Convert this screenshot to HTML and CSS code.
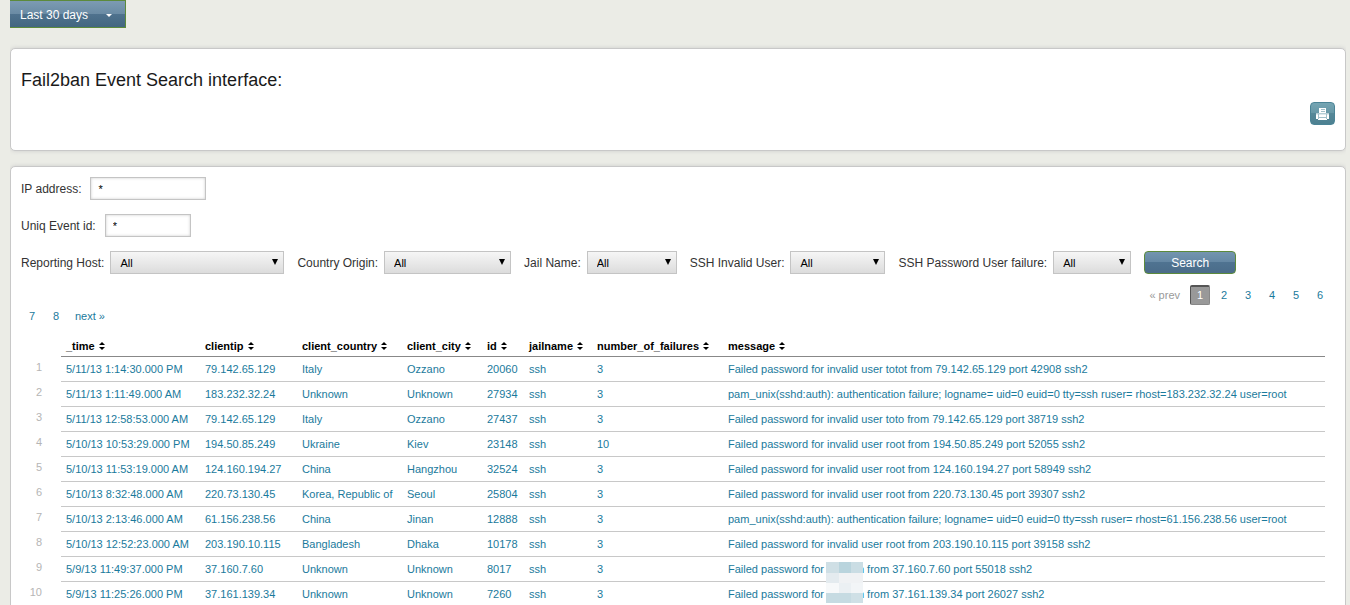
FILE: index.html
```
<!DOCTYPE html>
<html lang="en">
<head>
	<title>Fail2ban Event Search</title>
	<meta charset="UTF-8">
	<meta name="viewport" content="width=device-width, initial-scale=1.0">
	<link rel="stylesheet" href="styles.css">
</head>
<body>
	<button class="timerange" type="button">Last 30 days <span class="caret"></span></button>

	<div class="panel intro">
		<h1>Fail2ban Event Search interface:</h1>
		<button class="print" type="button" aria-label="Print">
			<svg width="13" height="12" viewBox="0 0 13 12" shape-rendering="crispEdges">
				<path fill="#fff" d="M3 0h7v5H3z"/>
				<path fill="#a3c1ca" d="M5 1h4v1H5zM5 3h4v1H5z"/>
				<path fill="#b5ced6" d="M0 5h13v1H0z"/>
				<path fill="#dfeaed" d="M0 6h13v1H0z"/>
				<path fill="#fff" d="M0 7h13v3H0zM0 10h2v1H0zM11 10h2v1h-2zM2 10h9v2H2z"/>
				<path fill="#a3c1ca" d="M2 6h1v5H2zM10 6h1v5h-1zM3 9h7v1H3z"/>
			</svg>
		</button>
	</div>

	<div class="panel">
		<form class="search" onsubmit="return false">
			<div class="field text">
				<label for="ip">IP address:</label>
				<input id="ip" class="ip" type="text" value="*">
			</div>
			<div class="field text">
				<label for="event">Uniq Event id:</label>
				<input id="event" class="event" type="text" value="*">
			</div>
			<div class="filters">
				<div class="field">
					<label for="host">Reporting Host:</label>
					<span class="select host"><select id="host"><option>All</option></select></span>
				</div>
				<div class="field">
					<label for="country">Country Origin:</label>
					<span class="select country"><select id="country"><option>All</option></select></span>
				</div>
				<div class="field">
					<label for="jail">Jail Name:</label>
					<span class="select jail"><select id="jail"><option>All</option></select></span>
				</div>
				<div class="field">
					<label for="invalid">SSH Invalid User:</label>
					<span class="select invalid"><select id="invalid"><option>All</option></select></span>
				</div>
				<div class="field">
					<label for="failure">SSH Password User failure:</label>
					<span class="select failure"><select id="failure"><option>All</option></select></span>
				</div>
				<button class="submit" type="submit">Search</button>
			</div>
		</form>

		<nav class="pager">
			<div class="pages end">
				<span class="prev">« prev</span>
				<span class="current">1</span>
				<a href="#">2</a>
				<a href="#">3</a>
				<a href="#">4</a>
				<a href="#">5</a>
				<a href="#">6</a>
			</div>
			<div class="pages">
				<a href="#">7</a>
				<a href="#">8</a>
				<a href="#">next »</a>
			</div>
		</nav>

		<table class="events">
			<colgroup>
				<col class="c-row"><col class="c-time"><col class="c-ip"><col class="c-country"><col class="c-city"><col class="c-id"><col class="c-jail"><col class="c-count"><col>
			</colgroup>
			<thead>
				<tr>
					<td></td>
					<th>_time <i class="sort"></i></th>
					<th>clientip <i class="sort"></i></th>
					<th>client_country <i class="sort"></i></th>
					<th>client_city <i class="sort"></i></th>
					<th>id <i class="sort"></i></th>
					<th>jailname <i class="sort"></i></th>
					<th>number_of_failures <i class="sort"></i></th>
					<th>message <i class="sort"></i></th>
				</tr>
			</thead>
			<tbody>
				<tr><td class="n">1</td><td>5/11/13 1:14:30.000 PM</td><td>79.142.65.129</td><td>Italy</td><td>Ozzano</td><td>20060</td><td>ssh</td><td>3</td><td>Failed password for invalid user totot from 79.142.65.129 port 42908 ssh2</td></tr>
				<tr><td class="n">2</td><td>5/11/13 1:11:49.000 AM</td><td>183.232.32.24</td><td>Unknown</td><td>Unknown</td><td>27934</td><td>ssh</td><td>3</td><td>pam_unix(sshd:auth): authentication failure; logname= uid=0 euid=0 tty=ssh ruser= rhost=183.232.32.24 user=root</td></tr>
				<tr><td class="n">3</td><td>5/11/13 12:58:53.000 AM</td><td>79.142.65.129</td><td>Italy</td><td>Ozzano</td><td>27437</td><td>ssh</td><td>3</td><td>Failed password for invalid user toto from 79.142.65.129 port 38719 ssh2</td></tr>
				<tr><td class="n">4</td><td>5/10/13 10:53:29.000 PM</td><td>194.50.85.249</td><td>Ukraine</td><td>Kiev</td><td>23148</td><td>ssh</td><td>10</td><td>Failed password for invalid user root from 194.50.85.249 port 52055 ssh2</td></tr>
				<tr><td class="n">5</td><td>5/10/13 11:53:19.000 AM</td><td>124.160.194.27</td><td>China</td><td>Hangzhou</td><td>32524</td><td>ssh</td><td>3</td><td>Failed password for invalid user root from 124.160.194.27 port 58949 ssh2</td></tr>
				<tr><td class="n">6</td><td>5/10/13 8:32:48.000 AM</td><td>220.73.130.45</td><td>Korea, Republic of</td><td>Seoul</td><td>25804</td><td>ssh</td><td>3</td><td>Failed password for invalid user root from 220.73.130.45 port 39307 ssh2</td></tr>
				<tr><td class="n">7</td><td>5/10/13 2:13:46.000 AM</td><td>61.156.238.56</td><td>China</td><td>Jinan</td><td>12888</td><td>ssh</td><td>3</td><td>pam_unix(sshd:auth): authentication failure; logname= uid=0 euid=0 tty=ssh ruser= rhost=61.156.238.56 user=root</td></tr>
				<tr><td class="n">8</td><td>5/10/13 12:52:23.000 AM</td><td>203.190.10.115</td><td>Bangladesh</td><td>Dhaka</td><td>10178</td><td>ssh</td><td>3</td><td>Failed password for invalid user root from 203.190.10.115 port 39158 ssh2</td></tr>
				<tr><td class="n">9</td><td>5/9/13 11:49:37.000 PM</td><td>37.160.7.60</td><td>Unknown</td><td>Unknown</td><td>8017</td><td>ssh</td><td>3</td><td>Failed password for <span class="user">n<svg class="mosaic" width="37" height="41" viewBox="0 0 37 41" shape-rendering="crispEdges">
					<path fill="#cfdfe5" d="M0 0h13v11H0z"/><path fill="#b9d4dd" d="M13 0h12v11H13z"/><path fill="#cadde4" d="M25 0h12v11H25z"/>
					<path fill="#e4ebef" d="M0 11h13v10H0z"/><path fill="#f0f2f4" d="M13 11h24v10H13z"/>
					<path fill="#f7f9fa" d="M0 21h13v10H0z"/><path fill="#ebf0f3" d="M13 21h12v10H13z"/><path fill="#f2f5f7" d="M25 21h12v10H25z"/>
					<path fill="#c6dbe2" d="M0 31h25v10H0z"/><path fill="#cfe0e6" d="M25 31h12v10H25z"/>
				</svg></span> from 37.160.7.60 port 55018 ssh2</td></tr>
				<tr><td class="n">10</td><td>5/9/13 11:25:26.000 PM</td><td>37.161.139.34</td><td>Unknown</td><td>Unknown</td><td>7260</td><td>ssh</td><td>3</td><td>Failed password for <span class="user">n</span> from 37.161.139.34 port 26027 ssh2</td></tr>
			</tbody>
		</table>
	</div>
</body>
</html>
```

FILE: styles.css
```
* {
	box-sizing: border-box;
}

body {
	margin: 0 4px 0 10px;
	background: #ebece6;
	color: #333;
	font: 12px/14px "Liberation Sans", Arial, sans-serif;
}

button, input, select {
	font-family: inherit;
	font-size: 12px;
}

a {
	color: #1a7a9c;
	text-decoration: none;
}

.timerange {
	display: flex;
	align-items: center;
	height: 28px;
	padding: 2px 13px 0 10px;
	border: 1px solid #5c8a3c;
	border-left: 0;
	background: linear-gradient(#7c9bb3, #6a8ba4 50%, #4f728e 50%, #426680);
	color: #fff;
}

.caret {
	margin-left: 18px;
	border: 3px solid transparent;
	border-top-color: #fff;
	border-bottom: 0;
}

.panel {
	margin-bottom: 15px;
	padding: 10px;
	border: 1px solid #c8c8c8;
	border-radius: 5px;
	background: #fff;
	box-shadow: 0 0 4px #ccc;
}

.intro {
	display: flex;
	flex-direction: column;
	margin-top: 20px;
	padding-bottom: 25px;
}

h1 {
	margin: 10px 0;
	color: #1a1a1a;
	font-size: 18px;
	font-weight: normal;
	line-height: 23px;
}

.print {
	display: flex;
	align-self: flex-end;
	align-items: center;
	justify-content: center;
	width: 25px;
	height: 23px;
	padding: 0;
	border: 1px solid #4b8496;
	border-radius: 4px;
	background: linear-gradient(#75a5b3, #6697a6 50%, #568898 50%, #4c8091);
}

.print svg {
	flex: none;
}

.search {
	display: flex;
	flex-direction: column;
	gap: 14px;
}

.field {
	display: flex;
	align-items: center;
	gap: 6px;
	white-space: nowrap;
}

.field.text {
	gap: 9px;
}

.field input {
	height: 23px;
	padding: 0 7px;
	border: 1px solid #c4c4c4;
	box-shadow: inset 0 0 3px #ccc;
	font-size: 11px;
}

.ip {
	width: 116px;
}

.event {
	width: 86px;
}

.filters {
	display: flex;
	flex-wrap: wrap;
	gap: 13px;
}

.select {
	position: relative;
}

.select::after {
	content: "";
	position: absolute;
	top: 8px;
	right: 6px;
	border: 3px solid transparent;
	border-top: 6px solid #000;
	border-bottom: 0;
	pointer-events: none;
}

select {
	display: block;
	width: 100%;
	height: 23px;
	padding: 0 9px;
	border: 1px solid #c4c4c4;
	border-radius: 0;
	background: linear-gradient(#f6f6f6, #dcdcdc);
	color: #000;
	font-size: 11px;
	appearance: none;
}

.host { width: 174px; }
.country { width: 127px; }
.jail { width: 90px; }
.invalid { width: 95px; }
.failure { width: 78px; }

.submit {
	width: 92px;
	height: 23px;
	padding: 0;
	border: 1px solid #5c8a3c;
	border-radius: 4px;
	background: linear-gradient(#7395af, #6487a3 50%, #4f7391 50%, #4b6c89);
	color: #fff;
}

.pager {
	margin-top: 11px;
	font-size: 11px;
}

.pages {
	display: flex;
	gap: 4px;
	height: 21px;
	padding: 0 5px 0 1px;
}

.pages.end {
	justify-content: flex-end;
}

.pages > * {
	min-width: 20px;
	height: 20px;
	padding: 3px 5px;
	text-align: center;
}

.prev {
	margin-right: 1px;
	color: #999;
}

.pages .current {
	padding: 2px 5px;
	border: 1px solid #888;
	border-top: 2px solid #555;
	border-left-color: #555;
	border-radius: 2px;
	background: #999;
	color: #fff;
	line-height: 13px;
}

.events {
	width: calc(100% - 10px);
	margin-top: 7px;
	border-collapse: collapse;
	table-layout: fixed;
	font-size: 11px;
}

.c-row { width: 40px; }
.c-time { width: 139px; }
.c-ip { width: 97px; }
.c-country { width: 105px; }
.c-city { width: 80px; }
.c-id { width: 42px; }
.c-jail { width: 68px; }
.c-count { width: 131px; }

.events th,
.events td {
	height: 25px;
	padding: 0 5px;
	border-bottom: 1px solid #c8c8c8;
	color: #1a7a9c;
	text-align: left;
	white-space: nowrap;
}

.events th {
	height: 22px;
	padding-top: 3px;
	border-bottom-color: #888;
	color: #000;
}

.events thead td {
	height: 22px;
	border: 0;
}

.events .n {
	padding: 0 19px 4px 0;
	border: 0;
	color: #b5b5b5;
	text-align: right;
}

.sort {
	display: inline-flex;
	flex-direction: column;
	gap: 2px;
	margin-left: 1px;
	vertical-align: 0;
}

.sort::before,
.sort::after {
	content: "";
	border: 3px solid transparent;
}

.sort::before {
	margin-top: -5px;
	border-top: 0;
	border-bottom-color: #000;
}

.sort::after {
	border-bottom: 0;
	border-top-color: #000;
}

.sort {
	vertical-align: 5px;
}

.user {
	position: relative;
	display: inline-block;
	width: 37px;
	text-align: right;
}

/* covers the user name in this row and in the one below */
.mosaic {
	position: absolute;
	z-index: 1;
	top: 0;
	left: -1px;
}
```
